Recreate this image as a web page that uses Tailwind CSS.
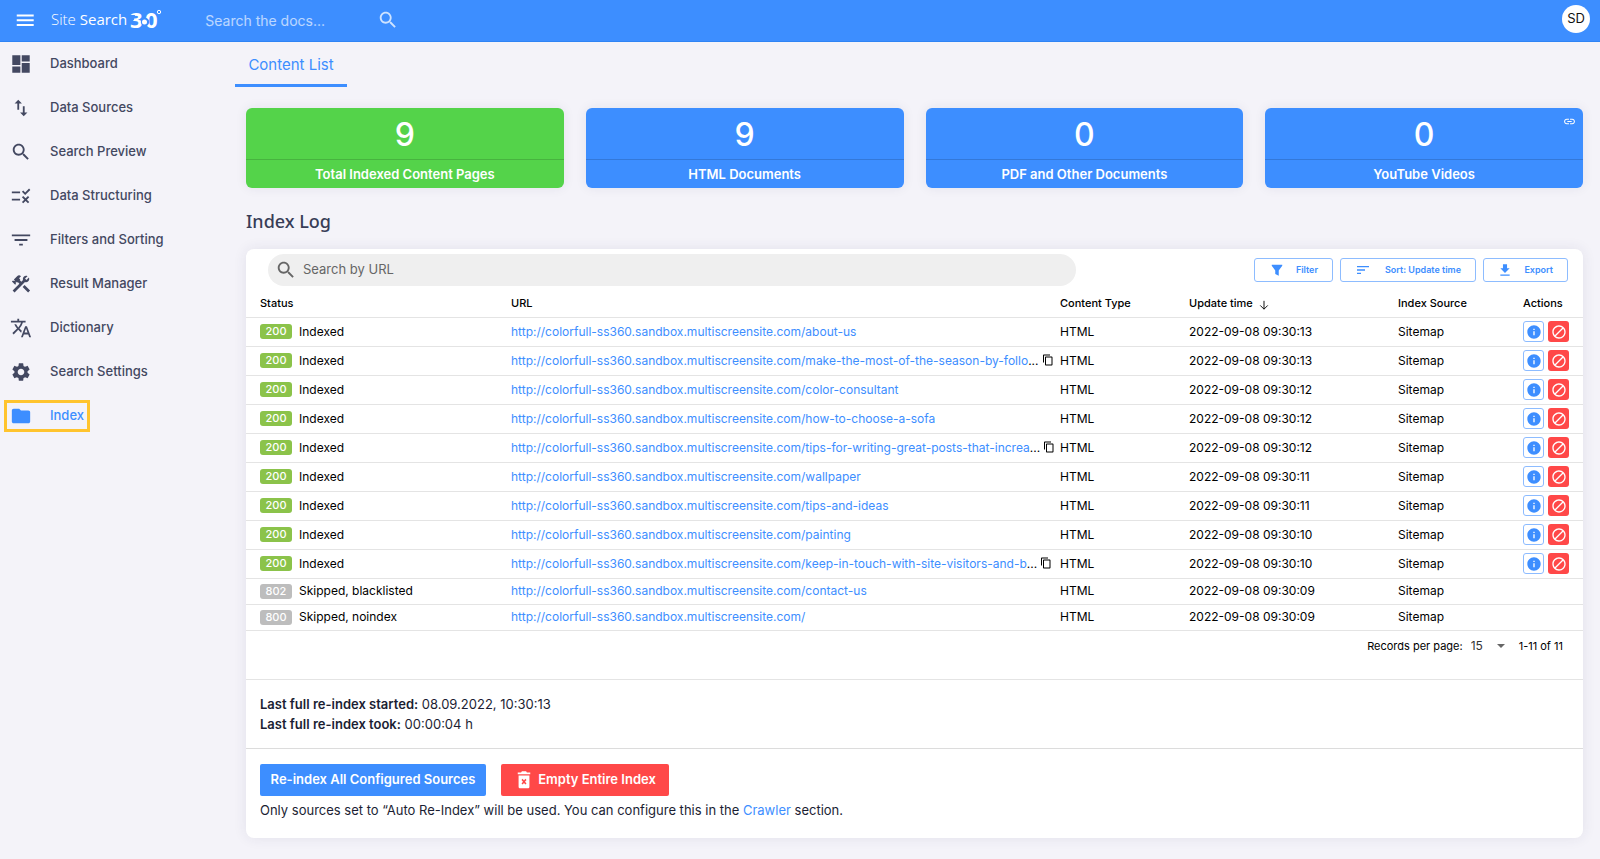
<!DOCTYPE html>
<html lang="en">
<head>
<meta charset="utf-8">
<title>Site Search 360 – Index</title>
<script src="https://cdn.jsdelivr.net/npm/@tailwindcss/browser@4"></script>
</head>
<body class="flex min-h-screen flex-col bg-[#f4f3f9] font-['Inter','Liberation_Sans',sans-serif] text-[13px] text-[#1b1e33]">
<svg class="hidden" aria-hidden="true">
  <symbol id="search" viewBox="0 0 24 24"><path d="M15.5 14h-.79l-.28-.27C15.41 12.59 16 11.11 16 9.5 16 5.91 13.09 3 9.5 3S3 5.91 3 9.5 5.91 16 9.5 16c1.61 0 3.09-.59 4.23-1.57l.27.28v.79l5 4.99L20.49 19l-4.99-5zm-6 0C7.01 14 5 11.99 5 9.5S7.01 5 9.5 5 14 7.01 14 9.5 11.99 14 9.5 14z"/></symbol>
  <symbol id="copy" viewBox="0 0 24 24"><path d="M16 1H4c-1.1 0-2 .9-2 2v14h2V3h12V1zm3 4H8c-1.1 0-2 .9-2 2v14c0 1.1.9 2 2 2h11c1.1 0 2-.9 2-2V7c0-1.1-.9-2-2-2zm0 16H8V7h11v14z"/></symbol>
  <symbol id="info" viewBox="0 0 24 24"><path d="M12 2C6.48 2 2 6.48 2 12s4.480 10 10 10 10-4.480 10-10S17.520 2 12 2zm1 15h-2v-6h2v6zm0-8h-2V7h2v2z"/></symbol>
  <symbol id="block" viewBox="0 0 24 24"><path d="M12 2C6.480 2 2 6.480 2 12s4.480 10 10 10 10-4.480 10-10S17.520 2 12 2zM4 12c0-4.420 3.580-8 8-8 1.850 0 3.550.63 4.900 1.690L5.690 16.900C4.630 15.550 4 13.850 4 12zm8 8c-1.850 0-3.550-.63-4.900-1.690L18.310 7.100C19.370 8.450 20 10.150 20 12c0 4.420-3.580 8-8 8z"/></symbol>
</svg>

<header class="flex h-[42px] items-center border-b border-[#2f84f5] bg-[#3d8eff] px-[14px] text-white">
  <button class="h-[22px] w-[22px]" aria-label="Menu"><svg class="h-[22px] w-[22px]" viewBox="0 0 24 24" fill="currentColor"><path d="M3 17.500h18.500v-2.300H3zm0-5.200h18.500V10H3zm0-7.500v2.300h18.500V4.800z"/></svg></button>
  <a href="#" class="ml-[14px] flex items-center gap-[3px] font-['Open_Sans',sans-serif] text-[15px] leading-9"><span class="-mt-[3px] pl-px"><span class="font-light">Site</span> <span class="font-medium">Search</span></span>
    <svg class="h-[36px] w-[32px] overflow-visible" viewBox="0 0 32 36" fill="#fff" aria-label="360°"><text x="0" y="25" font-family="Open Sans, sans-serif" font-size="22" font-weight="700">3</text><text x="15" y="25" font-family="Open Sans, sans-serif" font-size="22" font-weight="700">0</text><path d="M0 12h5l-1 5h-4z" fill="#3d8eff"/><circle cx="15" cy="19" r="4.200" fill="#3d8eff"/><circle cx="14.500" cy="19" r="2.500"/><circle cx="29" cy="9" r="1.700" fill="none" stroke="#fff"/></svg></a>
  <form class="ml-[43px] flex w-[194px] items-center">
    <input type="text" aria-label="Search the docs" placeholder="Search the docs..." class="w-[172px] min-w-0 bg-transparent text-sm outline-none placeholder:text-white/65">
    <button type="button" aria-label="Search docs"><svg class="mb-[2px] h-[22px] w-[22px]" fill="#fff" fill-opacity=".75"><use href="#search"/></svg></button>
  </form>
  <button class="ml-auto -mr-1 mb-[3px] h-7 w-7 rounded-full bg-white text-[13px] text-[#111]">SD</button>
</header>

<div class="flex flex-1">
  <nav class="w-[235px] shrink-0 font-medium text-[#434861]">
    <a href="#" class="flex h-11 items-center gap-[18px] pl-[10px]"><svg class="h-[22px] w-[22px]" viewBox="0 0 24 24" fill="currentColor"><path d="M2.500 13h8.800V2.500H2.500zm0 8.500h8.800v-6.800H2.500zm10.300 0h8.700V11h-8.700zm0-19v6.700h8.700V2.500z"/></svg>Dashboard</a>
    <a href="#" class="flex h-11 items-center gap-[18px] pl-[10px]"><svg class="h-[22px] w-[22px]" viewBox="0 0 24 24" fill="currentColor"><path d="M9 3L5 6.990h3V14h2V6.990h3L9 3zm7 14.010V10h-2v7.010h-3L15 21l4-3.990h-3z"/></svg>Data Sources</a>
    <a href="#" class="flex h-11 items-center gap-[18px] pl-[10px]"><svg class="h-[22px] w-[22px]" fill="currentColor"><use href="#search"/></svg>Search Preview</a>
    <a href="#" class="flex h-11 items-center gap-[18px] pl-[10px]"><svg class="h-[22px] w-[22px]" viewBox="0 0 24 24" fill="currentColor"><path d="M16.540 11L13 7.460l1.410-1.410 2.120 2.120 4.240-4.240 1.410 1.410L16.540 11zM11 7H2v2h9V7zm10 6.410L19.590 12 17 14.590 14.410 12 13 13.410 15.590 16 13 18.590 14.410 20 17 17.410 19.590 20 21 18.590 18.410 16 21 13.410zM11 15H2v2h9v-2z"/></svg>Data Structuring</a>
    <a href="#" class="flex h-11 items-center gap-[18px] pl-[10px]"><svg class="h-[22px] w-[22px]" viewBox="0 0 24 24" fill="currentColor"><path d="M10 18h4v-2h-4v2zM2 6v2h20V6H2zm3 7h14v-2H5v2z"/></svg>Filters and Sorting</a>
    <a href="#" class="flex h-11 items-center gap-[18px] pl-[10px]"><svg class="h-[22px] w-[22px]" viewBox="0 0 24 24" fill="currentColor"><path d="M13.783 15.172l2.121-2.121 5.996 5.996-2.121 2.121zM17.500 10c1.930 0 3.500-1.570 3.500-3.500 0-.58-.16-1.120-.41-1.600l-2.700 2.700-1.490-1.490 2.700-2.700c-.48-.25-1.020-.41-1.600-.41C15.570 3 14 4.570 14 6.500c0 .41.08.8.21 1.160l-1.850 1.850-1.780-1.780.71-.71-1.410-1.410L12 3.490a3 3 0 0 0-4.240 0L4.220 7.030l1.410 1.410H2.810l-.71.71 3.540 3.540.71-.71V9.150l1.410 1.410.71-.71 1.780 1.780-7.410 7.410 2.120 2.120L16.340 9.790c.36.13.75.21 1.160.21z"/></svg>Result Manager</a>
    <a href="#" class="flex h-11 items-center gap-[18px] pl-[10px]"><svg class="h-[22px] w-[22px]" viewBox="0 0 24 24" fill="currentColor"><path d="M12.870 15.070l-2.540-2.510.03-.03c1.740-1.940 2.980-4.170 3.710-6.530H17V4h-7V2H8v2H1v1.990h11.170C11.500 7.920 10.440 9.750 9 11.350 8.070 10.320 7.300 9.190 6.690 8h-2c.73 1.630 1.730 3.170 2.980 4.560l-5.090 5.020L4 19l5-5 3.110 3.110.76-2.040zM18.500 10h-2L12 22h2l1.120-3h4.750L21 22h2l-4.500-12zm-2.620 7l1.620-4.330L19.120 17h-3.240z"/></svg>Dictionary</a>
    <a href="#" class="flex h-11 items-center gap-[18px] pl-[10px]"><svg class="h-[22px] w-[22px]" viewBox="0 0 24 24" fill="currentColor"><path d="M19.140 12.940c.04-.3.06-.61.06-.94 0-.32-.02-.64-.07-.94l2.030-1.580c.18-.14.23-.41.12-.61l-1.920-3.320c-.12-.22-.37-.29-.59-.22l-2.390.96c-.5-.38-1.030-.7-1.620-.94l-.36-2.540c-.04-.24-.24-.41-.48-.41h-3.840c-.24 0-.43.17-.47.41l-.36 2.540c-.59.24-1.130.57-1.620.94l-2.390-.96c-.22-.08-.47 0-.59.22L2.740 8.870c-.12.21-.08.47.12.61l2.030 1.580c-.05.3-.09.63-.09.94s.02.64.07.94l-2.030 1.580c-.18.14-.23.41-.12.61l1.920 3.320c.12.22.37.29.59.22l2.390-.96c.5.38 1.030.7 1.620.94l.36 2.540c.05.24.24.41.48.41h3.840c.24 0 .44-.17.47-.41l.36-2.540c.59-.24 1.130-.56 1.620-.94l2.390.96c.22.08.47 0 .59-.22l1.920-3.320c.12-.22.07-.47-.12-.61l-2.010-1.580zM12 15.600c-1.980 0-3.600-1.620-3.600-3.600s1.620-3.600 3.600-3.600 3.600 1.620 3.600 3.600-1.620 3.600-3.600 3.600z"/></svg>Search Settings</a>
    <a href="#" class="ml-1 mt-[6px] flex h-8 w-[86px] items-center gap-[18px] border-3 border-[#ffc42e] pl-[3px] text-[#3d8eff]" aria-current="page"><svg class="h-[22px] w-[22px]" viewBox="0 0 24 24" fill="currentColor"><path d="M10 4H4c-1.100 0-2 .9-2 2v12c0 1.100.9 2 2 2h16c1.100 0 2-.9 2-2V8c0-1.100-.9-2-2-2h-8l-2-2z"/></svg>Index</a>
  </nav>

  <main class="min-w-0 flex-1 pr-[17px]">
    <a href="#" class="flex h-[45px] w-28 items-center justify-center border-b-[3px] border-[#3d8eff] pt-1 text-[15px] text-[#3d8eff]">Content List</a>

    <div class="pl-[11px] pt-[21px]">
      <section class="grid grid-cols-4 gap-[22px] text-center text-white">
        <div class="rounded-md bg-[#54d34a] shadow-[0_0_12px_rgba(40,40,90,0.08)]"><p class="flex h-13 items-center justify-center border-b border-black/15 pt-[2px] text-[32px] font-medium leading-8">9</p><p class="py-[4px] text-[13px] font-semibold leading-5">Total Indexed Content Pages</p></div>
        <div class="rounded-md bg-[#3d8eff] shadow-[0_0_12px_rgba(40,40,90,0.08)]"><p class="flex h-13 items-center justify-center border-b border-black/15 pt-[2px] text-[32px] font-medium leading-8">9</p><p class="py-[4px] text-[13px] font-semibold leading-5">HTML Documents</p></div>
        <div class="rounded-md bg-[#3d8eff] shadow-[0_0_12px_rgba(40,40,90,0.08)]"><p class="flex h-13 items-center justify-center border-b border-black/15 pt-[2px] text-[32px] font-medium leading-8">0</p><p class="py-[4px] text-[13px] font-semibold leading-5">PDF and Other Documents</p></div>
        <div class="relative rounded-md bg-[#3d8eff] shadow-[0_0_12px_rgba(40,40,90,0.08)]"><p class="flex h-13 items-center justify-center border-b border-black/15 pt-[2px] text-[32px] font-medium leading-8">0</p><p class="py-[4px] text-[13px] font-semibold leading-5">YouTube Videos</p>
          <svg class="absolute right-[7px] top-[7px] h-[13px] w-[13px]" viewBox="0 0 24 24" fill="currentColor"><path d="M3.900 12c0-1.710 1.390-3.100 3.100-3.100h4V7H7c-2.760 0-5 2.240-5 5s2.240 5 5 5h4v-1.900H7c-1.710 0-3.100-1.390-3.100-3.100zM8 13h8v-2H8v2zm9-6h-4v1.900h4c1.710 0 3.100 1.390 3.100 3.100s-1.390 3.100-3.100 3.100h-4V17h4c2.760 0 5-2.240 5-5s-2.240-5-5-5z"/></svg></div>
      </section>

      <h1 class="mt-[19px] font-['Noto_Sans',sans-serif] text-[18px] font-medium leading-7 text-[#383d57]">Index Log</h1>

      <section class="mt-[14px] rounded-lg bg-white shadow-[0_0_14px_rgba(40,40,90,0.09)]">
        <div class="flex items-center pl-[22px] pr-[15px] pt-[5px]">
          <label class="flex h-8 w-[808px] items-center rounded-full bg-[#efefef] pl-[7px] text-[#666]"><svg class="h-[22px] w-[22px]" fill="currentColor"><use href="#search"/></svg><input type="text" aria-label="Search by URL" placeholder="Search by URL" class="ml-[6px] flex-1 bg-transparent text-[13px] outline-none placeholder:text-[#666]"></label>
          <div class="ml-auto flex gap-[7px] text-[9px] font-semibold text-[#3d8eff]">
            <button class="flex h-6 w-[79px] items-center justify-between rounded-[3px] border border-[#8dbcff] pl-[15px] pr-[14px]"><svg class="h-[14px] w-[14px]" viewBox="0 0 24 24" fill="currentColor"><path d="M3 3h18v1.500l-6 8.500v9l-6-3v-6L3 4.500z"/></svg>Filter</button>
            <button class="flex h-6 w-[136px] items-center justify-between rounded-[3px] border border-[#8dbcff] px-[14px]"><svg class="h-4 w-4" viewBox="0 0 24 24" fill="currentColor"><path d="M3 18h6v-2H3v2zM3 6v2h18V6H3zm0 7h12v-2H3v2z"/></svg>Sort: Update time</button>
            <button class="flex h-6 w-[85px] items-center justify-between rounded-[3px] border border-[#8dbcff] px-[14px]"><svg class="h-[14px] w-[14px]" viewBox="0 0 24 24" fill="currentColor"><path d="M20 9h-4.500V2h-7v7H4l8 8zM4 19.500V22h16v-2.500z"/></svg>Export</button>
          </div>
        </div>

        <table class="w-full table-fixed text-left text-xs text-black">
          <colgroup><col class="w-[265px]"><col><col class="w-[129px]"><col class="w-[209px]"><col class="w-[125px]"><col class="w-[60px]"></colgroup>
          <thead class="text-[11px]"><tr class="h-[31px] border-b border-[#e4e4e4] *:pt-[5px]"><th class="pl-[14px] font-medium">Status</th><th class="font-medium">URL</th><th class="font-medium">Content Type</th><th class="font-medium"><span class="flex items-center gap-[6px]">Update time<svg class="mt-[3px] h-[10px] w-[10px]" viewBox="0 0 24 24" fill="none" stroke="currentColor" stroke-width="2.200"><path d="M12 2v20M3 13l9 9 9-9"/></svg></span></th><th class="font-medium">Index Source</th><th class="font-medium">Actions</th></tr></thead>
          <tbody id="rows"></tbody>
        </table>

        <div class="flex h-[49px] items-start justify-end border-b border-[#e4e4e4] pr-5 pt-[5px] text-[11px] leading-5 text-black">
          <label for="per-page">Records per page:</label>
          <div class="relative ml-2 flex items-center"><select id="per-page" class="h-5 w-[34px] appearance-none bg-transparent text-xs text-[#333] outline-none"><option>15</option></select><svg class="pointer-events-none absolute right-0 top-2 h-1 w-2" viewBox="0 0 8 4" fill="#666"><path d="M0 0h8L4 4z"/></svg></div>
          <span class="ml-[14px]">1-11 of 11</span>
        </div>

        <div class="border-b border-[#dcdcdc] px-[14px] pb-[14px] pt-[14px] leading-5">
          <p><b class="font-semibold">Last full re-index started:</b> 08.09.2022, 10:30:13</p>
          <p><b class="font-semibold">Last full re-index took:</b> 00:00:04 h</p>
        </div>

        <div class="px-[14px] pb-[18px] pt-[15px]">
          <div class="flex gap-[15px] text-[13px] font-semibold text-white">
            <button class="h-8 w-[226px] rounded-xs bg-[#3d8eff]">Re-index All Configured Sources</button>
            <button class="flex h-8 w-[168px] items-center justify-center gap-1 rounded-xs bg-[#ff4848]"><svg class="h-5 w-5" viewBox="0 0 24 24" fill="currentColor" fill-rule="evenodd"><path d="M4.500 3h4l1-1.500h5L15.500 3h4v2H4.500zM5.500 6.500h13V20c0 1.100-.9 2-2 2h-9c-1.100 0-2-.9-2-2zm3.500 5.400l1.800 2.100-1.800 2.100 1.400 1.400 1.600-2 1.600 2 1.400-1.400-1.800-2.100 1.800-2.100-1.400-1.400-1.600 2-1.600-2z"/></svg>Empty Entire Index</button>
          </div>
          <p class="mt-1 leading-5">Only sources set to “Auto Re-Index” will be used. You can configure this in the <a href="#" class="text-[#3d8eff]">Crawler</a> section.</p>
        </div>
      </section>
    </div>
  </main>
</div>

<script>
const base = 'http://colorfull-ss360.sandbox.multiscreensite.com/';
const data = [
  ['about-us', '13'], ['make-the-most-of-the-season-by-follo', '13', 1], ['color-consultant', '12'],
  ['how-to-choose-a-sofa', '12'], ['tips-for-writing-great-posts-that-increa', '12', 1], ['wallpaper', '11'],
  ['tips-and-ideas', '11'], ['painting', '10'], ['keep-in-touch-with-site-visitors-and-b', '10', 1],
  ['contact-us', '09', 0, '802', 'Skipped, blacklisted'], ['', '09', 0, '800', 'Skipped, noindex']
];
document.getElementById('rows').innerHTML = data.map(([path, sec, cut, code, label]) => `
<tr class="${code ? 'h-[26px]' : 'h-[29px]'} border-b border-[#e4e4e4]">
  <td class="pl-[14px]"><div class="flex items-center gap-[7px]"><span class="flex h-[15px] w-8 items-center justify-center rounded-[3px] text-[11px] font-medium text-white ${code ? 'bg-[#bdbdbd]' : 'bg-[#8bc34a]'}">${code || '200'}</span>${label || 'Indexed'}</div></td>
  <td><div class="flex items-center gap-[3px]"><span class="whitespace-nowrap"><a href="#" class="text-[#3d8eff]">${base}${path}</a>${cut ? '...' : ''}</span>${cut ? '<button aria-label="Copy URL"><svg class="mb-[2px] block h-3 w-3" fill="currentColor"><use href="#copy"/></svg></button>' : ''}</div></td>
  <td>HTML</td><td>2022-09-08 09:30:${sec}</td><td>Sitemap</td>
  <td>${code ? '' : '<div class="flex gap-1"><button aria-label="Details" class="flex h-[21px] w-[21px] items-center justify-center rounded-[3px] border border-[#8dbcff] text-[#3d8eff]"><svg class="h-4 w-4" fill="currentColor"><use href="#info"/></svg></button><button aria-label="Block" class="flex h-[21px] w-[21px] items-center justify-center rounded-[3px] bg-[#ff4848] text-white"><svg class="h-4 w-4" fill="currentColor"><use href="#block"/></svg></button></div>'}</td>
</tr>`).join('');
</script>
</body>
</html>
